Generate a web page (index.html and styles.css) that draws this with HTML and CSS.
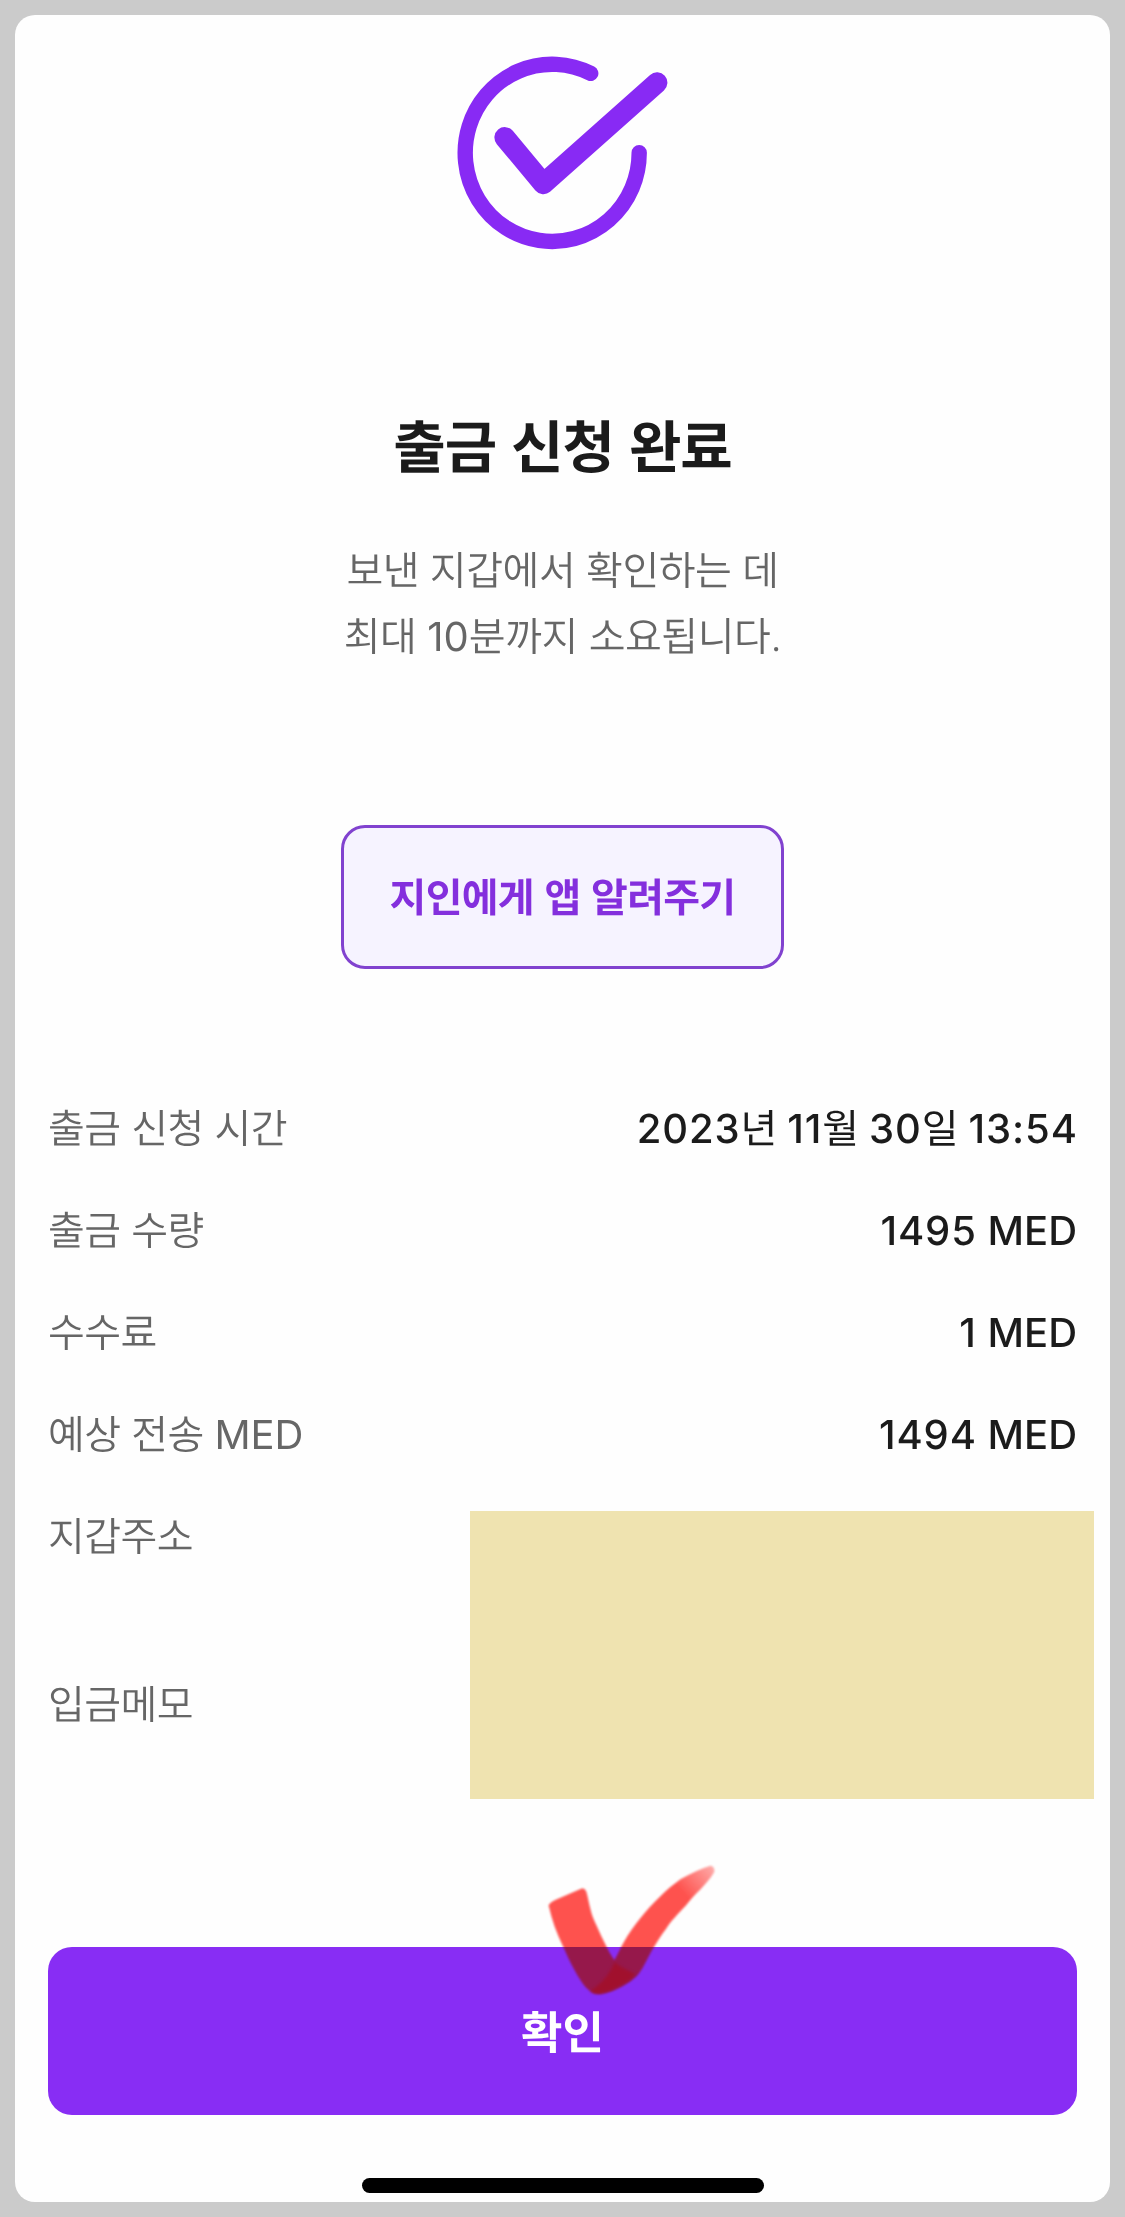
FILE: index.html
```
<!DOCTYPE html>
<html lang="ko">
<head>
<meta charset="utf-8">
<title>출금 신청 완료</title>
<link rel="stylesheet" href="styles.css">
</head>
<body>
<main class="screen">
  <svg class="done-icon" width="213" height="206" viewBox="456 50 213 206" aria-hidden="true">
    <path class="ring" d="M590.7 73.4A87 88.6 0 1 0 639.2 152.7"/>
    <path class="tick" d="M504.8 137.5L543.4 183.8L657 82.7"/>
  </svg>
  <h1 class="title">출금 신청 완료</h1>
  <p class="message">보낸 지갑에서 확인하는 데<br>최대 <span class="latin">10</span>분까지 소요됩니다.</p>
  <button class="share" type="button">지인에게 앱 알려주기</button>

  <dl class="details">
    <div class="row"><dt>출금 신청 시간</dt><dd><span class="num">2023</span><span class="ko">년</span> <span class="num">11</span><span class="ko">월</span> <span class="num">30</span><span class="ko">일</span> <span class="num">13:54</span></dd></div>
    <div class="row"><dt>출금 수량</dt><dd><span class="num">1495</span> MED</dd></div>
    <div class="row"><dt>수수료</dt><dd><span class="num">1</span> MED</dd></div>
    <div class="row"><dt>예상 전송 <span class="latin">MED</span></dt><dd><span class="num">1494</span> MED</dd></div>
  </dl>
  <div class="private">
    <div class="private-labels"><span>지갑주소</span><span>입금메모</span></div>
    <div class="cover"></div>
  </div>

  <button class="confirm" type="button">확인
    <svg class="marker" width="220" height="160" viewBox="0 0 660 480" aria-hidden="true">
      <defs>
        <linearGradient id="ink" gradientUnits="userSpaceOnUse" x1="590" y1="40" x2="490" y2="130">
          <stop offset="0" stop-color="#ffc4bf"/>
          <stop offset="1" stop-color="#ff5149"/>
        </linearGradient>
        <path id="stroke" d="M86 166Q92 156 108 149L184 116Q194 114 199 126C208 160 210 185 224 215C240 250 262 300 283 331C296 310 302 292 312 276C326 250 344 226 360 206C400 158 440 118 482 88Q530 60 572 47Q586 52 582 67C560 105 520 135 498 166C470 196 452 214 438 236C422 256 408 280 396 300C382 325 366 362 350 378C325 402 270 432 235 432C205 430 185 398 165 362C150 335 140 312 130 290C110 250 96 210 86 166Z"/>
      </defs>
      <use class="marker-ink" href="#stroke" fill="url(#ink)"/>
      <use class="marker-sheen" href="#stroke"/>
      <path class="marker-cross" d="M284 336C306 356 330 362 344 372Q336 388 316 398C290 412 262 430 235 431Q216 431 210 424C240 404 268 376 284 336Z"/>
    </svg>
  </button>
  <div class="home-bar"></div>
</main>
</body>
</html>
```
FILE: styles.css
```
* { box-sizing: border-box; margin: 0; padding: 0; }

body {
  height: 2217px;
  padding: 15px;
  background: #cbcbcb;
  font-family: Inter, "Noto Sans CJK KR", sans-serif;
  color: #1b1b1b;
  text-rendering: geometricPrecision;
}

.screen {
  display: flex;
  flex-direction: column;
  align-items: center;
  height: 2187px;
  padding: 35px 33px 0;
  border-radius: 20px;
  background: #fefefe;
}

.done-icon { display: block; flex: none; }
.done-icon path {
  fill: none;
  stroke: #882af4;
  stroke-linecap: round;
  stroke-linejoin: round;
}
.done-icon .ring { stroke-width: 15.4; }
.done-icon .tick { stroke-width: 20.8; }

.title {
  margin-top: 146px;
  font: 700 57px/84px "Noto Sans CJK KR", sans-serif;
  letter-spacing: -1px;
}

.message {
  margin-top: 52px;
  font-size: 40px;
  font-weight: 350;
  line-height: 66px;
  letter-spacing: -0.45px;
  text-align: center;
  color: #666;
}
.latin { font-weight: 400; letter-spacing: 0; }

.share {
  width: 443px;
  height: 144px;
  margin-top: 155px;
  padding-bottom: 4px;
  border: 3px solid #8142cf;
  border-radius: 24px;
  background: #f6f3ff;
  font: 700 40px/58px "Noto Sans CJK KR", sans-serif;
  letter-spacing: -0.7px;
  text-rendering: geometricPrecision;
  color: #842fdd;
}

.details {
  display: flex;
  flex-direction: column;
  gap: 54px;
  align-self: stretch;
  margin-top: 136px;
  font-size: 40px;
  line-height: 48px;
}
.row { display: flex; justify-content: space-between; height: 48px; }
dt, .private-labels { font-weight: 350; letter-spacing: -0.55px; color: #666; }
dd { font-weight: 450; white-space: nowrap; }
.num { letter-spacing: 0.9px; }
.num:last-child:not(:first-child) { margin-right: -0.9px; }
.ko { font-weight: 400; letter-spacing: -0.7px; }

.private {
  display: flex;
  justify-content: space-between;
  align-self: stretch;
  margin: 52px -17px 0 0;
  font-size: 40px;
  line-height: 48px;
}
.private-labels { display: flex; flex-direction: column; gap: 120px; padding-top: 2px; }
.cover { width: 624px; height: 288px; background: #efe3b0; }

.confirm {
  position: relative;
  align-self: stretch;
  height: 168px;
  margin-top: 148px;
  padding-bottom: 4px;
  border: 0;
  border-radius: 24px;
  background: #882df4;
  font: 700 45px/65px "Noto Sans CJK KR", sans-serif;
  text-rendering: geometricPrecision;
  color: #fff;
}

/* Felt-pen tick that overlaps the top edge of the button */
.marker { position: absolute; left: 472px; top: -97px; pointer-events: none; }
.marker-ink { mix-blend-mode: multiply; filter: blur(3px); }
.marker-sheen { fill: #ff5a72; opacity: 0.12; filter: blur(3px); }
.marker-cross { fill: #a80c1c; opacity: 0.62; filter: blur(5px); }

.home-bar {
  width: 402px;
  height: 15px;
  margin-top: 63px;
  border-radius: 8px;
  background: #000;
}
```
